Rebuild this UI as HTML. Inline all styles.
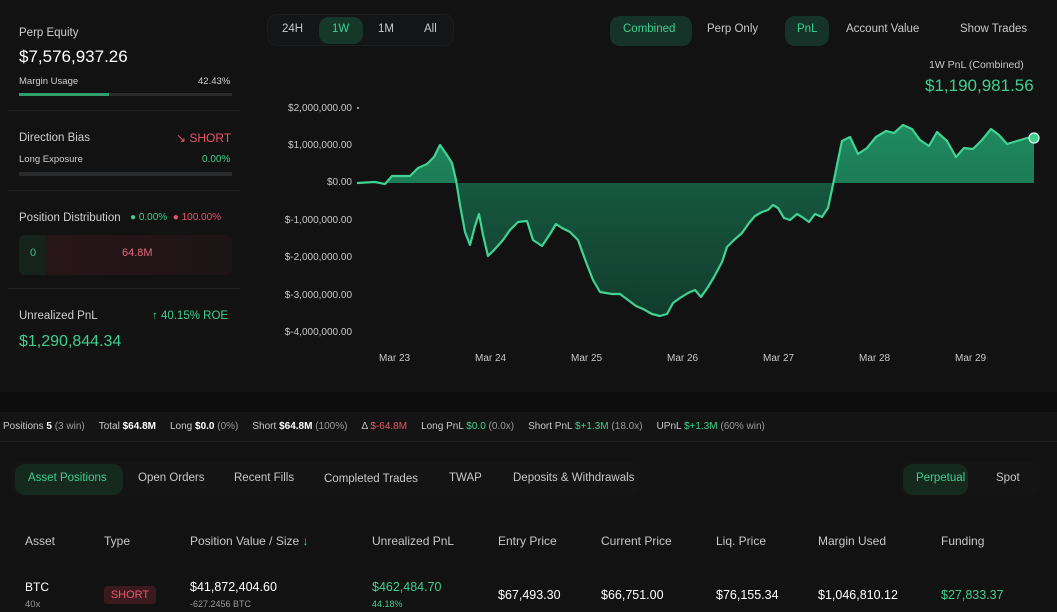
<!DOCTYPE html><html><head><meta charset="utf-8"><style>
*{box-sizing:border-box;margin:0;padding:0}
body{width:1057px;height:612px;overflow:hidden;background:#121213;font-family:"Liberation Sans",sans-serif;color:#d8d8d8;position:relative}
.a{position:absolute;white-space:nowrap}
.g{color:#3fcf8e}.r{color:#e8566a}.m{color:#9a9a9a}.w{color:#fff}
.lbl{font-size:11.5px;color:#cfcfcf}
.sm{font-size:9.5px;color:#cfcfcf}
.hr{position:absolute;left:8px;width:232px;height:1px;background:#222324}
.pill{position:absolute;border-radius:10px}
.st span.grp{margin-right:14px}
</style></head><body>
<div class="a" style="left:0;top:392px;width:1057px;height:20px;background:#0d0d0e"></div>
<div class="a" style="left:0;top:412px;width:1057px;height:30px;background:#141415;border-bottom:1px solid #222"></div>

<div class="a lbl" style="left:19px;top:27px">Perp Equity</div>
<div class="a w" style="left:19px;top:47px;font-size:17px">$7,576,937.26</div>
<div class="a sm" style="left:19px;top:76px">Margin Usage</div>
<div class="a sm" style="left:198px;top:76px">42.43%</div>
<div class="a" style="left:19px;top:93px;width:213px;height:3px;background:#2a2b2c"></div>
<div class="a" style="left:19px;top:93px;width:90px;height:3px;background:#2f9e6d"></div>
<div class="hr" style="top:110px"></div>
<div class="a lbl" style="left:19px;top:132px">Direction Bias</div>
<div class="a r" style="left:176px;top:131px;font-size:12px">↘ SHORT</div>
<div class="a sm" style="left:19px;top:154px">Long Exposure</div>
<div class="a g" style="left:202px;top:154px;font-size:10px">0.00%</div>
<div class="a" style="left:19px;top:172px;width:213px;height:4px;background:#2a2b2c"></div>
<div class="hr" style="top:190px"></div>
<div class="a lbl" style="left:19px;top:212px">Position Distribution</div>
<div class="a" style="left:130px;top:212px;font-size:10px"><span class="g">●</span> <span class="g">0.00%</span> &nbsp;<span class="r">●</span> <span class="r">100.00%</span></div>
<div class="a" style="left:19px;top:235px;width:213px;height:40px;border-radius:6px;background:linear-gradient(90deg,#2a1519,#1c1416)"></div>
<div class="a" style="left:19px;top:235px;width:27px;height:40px;border-radius:6px 0 0 6px;background:#15231c"></div>
<div class="a g" style="left:30px;top:247px;font-size:11px;color:#3fbf8a">0</div>
<div class="a" style="left:122px;top:247px;font-size:11px;color:#e06a7a">64.8M</div>
<div class="hr" style="top:288px"></div>
<div class="a lbl" style="left:19px;top:310px">Unrealized PnL</div>
<div class="a g" style="left:152px;top:310px;font-size:11.5px">↑ 40.15% ROE</div>
<div class="a g" style="left:19px;top:333px;font-size:16px">$1,290,844.34</div>

<div class="a" style="left:267px;top:14px;width:187px;height:32px;border-radius:10px;background:#141516;border:1px solid #1c1d1e"></div>
<div class="pill" style="left:319px;top:17px;width:44px;height:27px;background:#16382a"></div>
<div class="a" style="left:282px;top:23px;font-size:11.5px;color:#c8c8c8">24H</div>
<div class="a g" style="left:332px;top:23px;font-size:11.5px">1W</div>
<div class="a" style="left:378px;top:23px;font-size:11.5px;color:#c8c8c8">1M</div>
<div class="a" style="left:424px;top:23px;font-size:11.5px;color:#c8c8c8">All</div>
<div class="pill" style="left:610px;top:16px;width:82px;height:30px;background:#16332a"></div>
<div class="a g" style="left:623px;top:23px;font-size:11.5px">Combined</div>
<div class="a" style="left:707px;top:23px;font-size:11.5px;color:#c8c8c8">Perp Only</div>
<div class="pill" style="left:785px;top:16px;width:44px;height:30px;background:#16332a"></div>
<div class="a g" style="left:797px;top:23px;font-size:11.5px">PnL</div>
<div class="a" style="left:846px;top:23px;font-size:11.5px;color:#c8c8c8">Account Value</div>
<div class="a" style="left:960px;top:23px;font-size:11.5px;color:#c8c8c8">Show Trades</div>
<div class="a" style="left:929px;top:59px;font-size:10.5px;color:#c8c8c8">1W PnL (Combined)</div>
<div class="a g" style="left:925px;top:76px;font-size:17px">$1,190,981.56</div>

<div class="a" style="left:240px;top:102px;width:112px;text-align:right;font-size:10px;line-height:13px;color:#c8c8c8">
<div style="position:absolute;right:0;top:0">$2,000,000.00</div>
<div style="position:absolute;right:0;top:37px">$1,000,000.00</div>
<div style="position:absolute;right:0;top:74px">$0.00</div>
<div style="position:absolute;right:0;top:112px">$-1,000,000.00</div>
<div style="position:absolute;right:0;top:149px">$-2,000,000.00</div>
<div style="position:absolute;right:0;top:187px">$-3,000,000.00</div>
<div style="position:absolute;right:0;top:224px">$-4,000,000.00</div>
</div>
<svg class="a" style="left:0;top:0" width="1057" height="392">
<defs><linearGradient id="gu" x1="0" y1="0" x2="0" y2="1"><stop offset="0" stop-color="#1f8a60"/><stop offset="1" stop-color="#145a40"/></linearGradient>
<linearGradient id="gd" x1="0" y1="0" x2="0" y2="1"><stop offset="0" stop-color="#176448"/><stop offset="1" stop-color="#123c2d"/></linearGradient>
<clipPath id="up"><rect x="0" y="0" width="1057" height="183"/></clipPath><clipPath id="dn"><rect x="0" y="183" width="1057" height="200"/></clipPath></defs>
<circle cx="358" cy="108" r="1" fill="#ccc"/>
<path id="pp" d="M357,183 L375,182 L385,184 L392,176 L410,176 L418,168 L427,164 L434,157 L440,145 L447,155 L452,163 L456,180 L460,205 L465,232 L470,245 L475,226 L479,214 L483,235 L488,256 L495,249 L503,240 L510,230 L518,222 L527,221 L533,240 L542,246 L550,234 L556,224 L562,228 L570,232 L578,240 L586,262 L593,280 L600,292 L612,294 L620,294 L628,300 L636,306 L643,309 L652,314 L660,316 L667,314 L673,303 L680,298 L688,293 L695,290 L701,297 L708,287 L714,277 L722,262 L727,247 L734,240 L742,233 L749,223 L755,216 L762,212 L768,210 L773,205 L778,208 L784,218 L790,220 L797,214 L802,217 L809,222 L815,214 L822,217 L828,208 L834,180 L838,160 L842,141 L850,137 L858,154 L867,148 L876,137 L886,131 L894,133 L903,125 L912,129 L920,140 L929,146 L937,132 L947,141 L956,157 L964,148 L973,149 L982,140 L991,129 L999,135 L1007,144 L1017,141 L1027,138 L1034,138" fill="none"/>
<path clip-path="url(#up)" d="M357,183 L375,182 L385,184 L392,176 L410,176 L418,168 L427,164 L434,157 L440,145 L447,155 L452,163 L456,180 L460,205 L465,232 L470,245 L475,226 L479,214 L483,235 L488,256 L495,249 L503,240 L510,230 L518,222 L527,221 L533,240 L542,246 L550,234 L556,224 L562,228 L570,232 L578,240 L586,262 L593,280 L600,292 L612,294 L620,294 L628,300 L636,306 L643,309 L652,314 L660,316 L667,314 L673,303 L680,298 L688,293 L695,290 L701,297 L708,287 L714,277 L722,262 L727,247 L734,240 L742,233 L749,223 L755,216 L762,212 L768,210 L773,205 L778,208 L784,218 L790,220 L797,214 L802,217 L809,222 L815,214 L822,217 L828,208 L834,180 L838,160 L842,141 L850,137 L858,154 L867,148 L876,137 L886,131 L894,133 L903,125 L912,129 L920,140 L929,146 L937,132 L947,141 L956,157 L964,148 L973,149 L982,140 L991,129 L999,135 L1007,144 L1017,141 L1027,138 L1034,138 L1034,183 Z" fill="url(#gu)"/>
<path clip-path="url(#dn)" d="M357,183 L375,182 L385,184 L392,176 L410,176 L418,168 L427,164 L434,157 L440,145 L447,155 L452,163 L456,180 L460,205 L465,232 L470,245 L475,226 L479,214 L483,235 L488,256 L495,249 L503,240 L510,230 L518,222 L527,221 L533,240 L542,246 L550,234 L556,224 L562,228 L570,232 L578,240 L586,262 L593,280 L600,292 L612,294 L620,294 L628,300 L636,306 L643,309 L652,314 L660,316 L667,314 L673,303 L680,298 L688,293 L695,290 L701,297 L708,287 L714,277 L722,262 L727,247 L734,240 L742,233 L749,223 L755,216 L762,212 L768,210 L773,205 L778,208 L784,218 L790,220 L797,214 L802,217 L809,222 L815,214 L822,217 L828,208 L834,180 L838,160 L842,141 L850,137 L858,154 L867,148 L876,137 L886,131 L894,133 L903,125 L912,129 L920,140 L929,146 L937,132 L947,141 L956,157 L964,148 L973,149 L982,140 L991,129 L999,135 L1007,144 L1017,141 L1027,138 L1034,138 L1034,183 Z" fill="url(#gd)"/>
<use href="#pp" stroke="#3fd394" stroke-width="2.2" stroke-linejoin="round"/>
<circle cx="1034" cy="138" r="5" fill="#3fcf8e" stroke="#e8fff4" stroke-width="1.2"/>
<g font-family="Liberation Sans" font-size="10" fill="#c8c8c8">
<text x="379" y="361">Mar 23</text><text x="475" y="361">Mar 24</text><text x="571" y="361">Mar 25</text><text x="667" y="361">Mar 26</text><text x="763" y="361">Mar 27</text><text x="859" y="361">Mar 28</text><text x="955" y="361">Mar 29</text></g>
</svg>

<div class="a st" style="left:3px;top:421px;font-size:10px;color:#c8c8c8">
<span class="grp">Positions <b class="w">5</b> <span class="m">(3 win)</span></span><span class="grp">Total <b class="w">$64.8M</b></span><span class="grp">Long <b class="w">$0.0</b> <span class="m">(0%)</span></span><span class="grp">Short <b class="w">$64.8M</b> <span class="m">(100%)</span></span><span class="grp">Δ <span class="r">$-64.8M</span></span><span class="grp">Long PnL <span class="g">$0.0</span> <span class="m">(0.0x)</span></span><span class="grp">Short PnL <span class="g">$+1.3M</span> <span class="m">(18.0x)</span></span><span class="grp">UPnL <span class="g">$+1.3M</span> <span class="m">(60% win)</span></span></div>

<div class="a" style="left:10px;top:462px;width:630px;height:34px;border-radius:10px;background:#141415"></div>
<div class="pill" style="left:15px;top:464px;width:108px;height:31px;background:#15291f"></div>
<div class="a g" style="left:28px;top:472px;font-size:11.5px">Asset Positions</div>
<div class="a" style="left:138px;top:472px;font-size:11.5px;color:#c8c8c8">Open Orders</div>
<div class="a" style="left:234px;top:472px;font-size:11.5px;color:#c8c8c8">Recent Fills</div>
<div class="a" style="left:324px;top:473px;font-size:11.5px;color:#c8c8c8">Completed Trades</div>
<div class="a" style="left:449px;top:472px;font-size:11.5px;color:#c8c8c8">TWAP</div>
<div class="a" style="left:513px;top:472px;font-size:11.5px;color:#c8c8c8">Deposits &amp; Withdrawals</div>
<div class="a" style="left:900px;top:462px;width:140px;height:34px;border-radius:10px;background:#141415"></div>
<div class="pill" style="left:903px;top:464px;width:65px;height:31px;background:#15291f"></div>
<div class="a g" style="left:916px;top:472px;font-size:11.5px">Perpetual</div>
<div class="a" style="left:996px;top:472px;font-size:11.5px;color:#c8c8c8">Spot</div>

<div class="a" style="top:534px;left:0;font-size:12px;color:#c8c8c8;width:1057px">
<span class="a" style="left:25px">Asset</span><span class="a" style="left:104px">Type</span><span class="a" style="left:190px">Position Value / Size <span class="g">↓</span></span><span class="a" style="left:372px">Unrealized PnL</span><span class="a" style="left:498px">Entry Price</span><span class="a" style="left:601px">Current Price</span><span class="a" style="left:716px">Liq. Price</span><span class="a" style="left:818px">Margin Used</span><span class="a" style="left:941px">Funding</span></div>
<div class="a w" style="left:25px;top:580px;font-size:12px">BTC</div>
<div class="a m" style="left:25px;top:599px;font-size:9.5px">40x</div>
<div class="a" style="left:104px;top:586px;width:52px;height:18px;border-radius:3px;background:#3a1a1f;color:#e8566a;font-size:11px;text-align:center;line-height:18px">SHORT</div>
<div class="a w" style="left:190px;top:580px;font-size:12.5px">$41,872,404.60</div>
<div class="a m" style="left:190px;top:599px;font-size:9px">-627.2456 BTC</div>
<div class="a g" style="left:372px;top:580px;font-size:12.5px">$462,484.70</div>
<div class="a g" style="left:372px;top:599px;font-size:9px">44.18%</div>
<div class="a w" style="left:498px;top:588px;font-size:12.5px">$67,493.30</div>
<div class="a w" style="left:601px;top:588px;font-size:12.5px">$66,751.00</div>
<div class="a w" style="left:716px;top:588px;font-size:12.5px">$76,155.34</div>
<div class="a w" style="left:818px;top:588px;font-size:12.5px">$1,046,810.12</div>
<div class="a g" style="left:941px;top:588px;font-size:12.5px">$27,833.37</div>
</body></html>
